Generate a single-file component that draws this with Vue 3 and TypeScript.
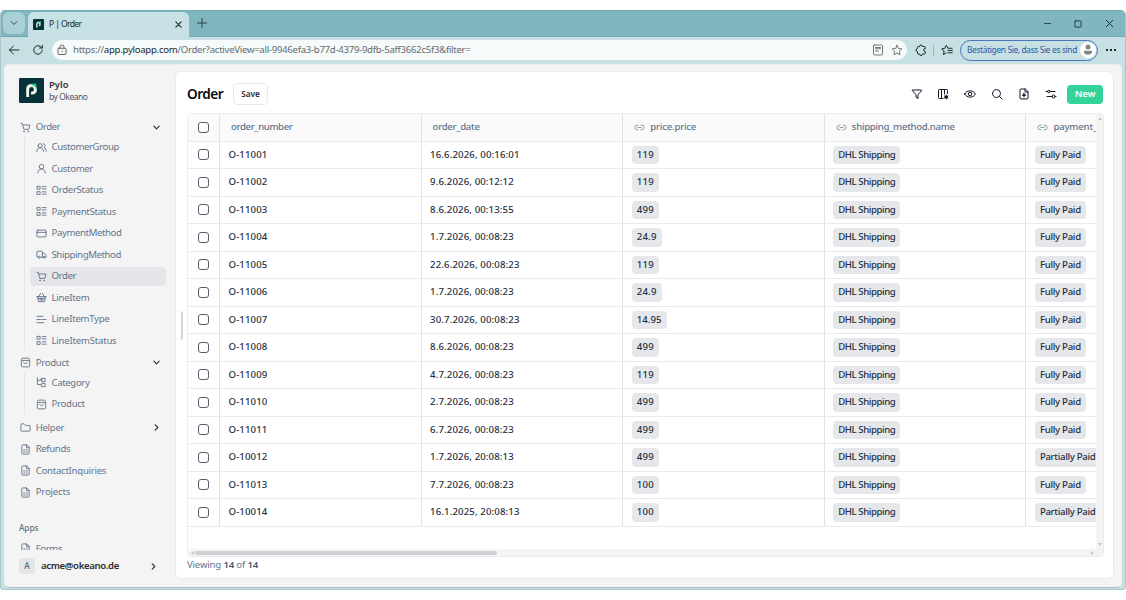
<script setup lang="ts">
interface Item { label: string; icon: string; w: number; active?: boolean }
interface Group { label: string; icon: string; w: number; children: Item[] }

const icons: Record<string, string> = {
  cart: 'M2 3h3l3.4 13h10.8l2.3-9.5H6.2 M8 20.5a1 1 0 1 0 2 0a1 1 0 1 0-2 0 M17 20.5a1 1 0 1 0 2 0a1 1 0 1 0-2 0',
  users: 'M4.500 8a4.500 4.500 0 1 0 9 0a4.500 4.500 0 1 0-9 0 M1.500 21c0-5 3-8.500 7.500-8.500s7.500 3.500 7.500 8.500 M16 3.500a4.500 4.500 0 0 1 1.500 8.500c3 1 5 4 5 8',
  user: 'M7 8a5 5 0 1 0 10 0a5 5 0 1 0-10 0 M4 21.500c0-5 3-8.500 8-8.500s8 3.500 8 8.500',
  list: 'M3 3h6v6H3z M3 14.500h6v6H3z M13.500 3.500H22 M13.500 8.500H22 M13.500 15H22 M13.500 20H22',
  card: 'M4 4.500h16a2 2 0 0 1 2 2v11a2 2 0 0 1-2 2H4a2 2 0 0 1-2-2v-11a2 2 0 0 1 2-2z M2 9.500h20',
  truck: 'M5 18H3.500A1.500 1.500 0 0 1 2 16.500v-10A1.500 1.500 0 0 1 3.500 5h9A1.500 1.500 0 0 1 14 6.500V18H9.500 M14 9h4l4 4.500V18h-2.500 M5 18a2.200 2.200 0 1 0 4.400 0a2.200 2.200 0 1 0-4.400 0 M15 18a2.200 2.200 0 1 0 4.400 0a2.200 2.200 0 1 0-4.400 0',
  basket: 'M1.500 10h21 M3.500 10.500l2 10.500h13l2-10.500 M6 10l4-7 M18 10l-4-7 M9 13.500v4.500 M12 13.500v4.500 M15 13.500v4.500 M4 14h16',
  lines: 'M2 5h13 M2 12h9 M14 12h8 M2 19h15',
  bag: 'M4.500 7.500h15a1.500 1.500 0 0 1 1.500 1.500v10a2.500 2.500 0 0 1-2.500 2.500h-13A2.500 2.500 0 0 1 3 19V6l2-3.500h14L21 6v3 M8 11.500c.8 4.500 7.200 4.500 8 0',
  tree: 'M3 2v14.500h7 M3 7h7 M13 3h7v7h-7z M13 14h7v7h-7z M10 5h3',
  folder: 'M2 5.500A1.500 1.500 0 0 1 3.500 4H9l3 3.500h8.500A1.500 1.500 0 0 1 22 9v9.500a1.500 1.500 0 0 1-1.500 1.500h-17A1.500 1.500 0 0 1 2 18.500z',
  file: 'M14 2H6a2 2 0 0 0-2 2v16a2 2 0 0 0 2 2h12a2 2 0 0 0 2-2V8z M14 2v6h6 M8 13h2.500 M13.500 13H16 M8 17.500h2.500 M13.500 17.500H16',
  down: 'M5 8.500l7 7l7-7',
  right: 'M8.500 5l7 7l-7 7',
  filter: 'M3 4h18v1.500l-7 8V21l-4-2.500v-5L3 5.500z',
  columns: 'M21 11V4.500A1.500 1.500 0 0 0 19.500 3h-15A1.500 1.500 0 0 0 3 4.500v15A1.500 1.500 0 0 0 4.500 21H12 M9 3v18 M15 3v9 M16 18a2.500 2.500 0 1 0 5 0a2.500 2.500 0 1 0-5 0 M18.500 14v8 M15 16l7 4 M15 20l7-4',
  eye: 'M1.500 12C5 3.500 19 3.500 22.500 12C19 20.500 5 20.500 1.500 12z M8.500 12a3.500 3.500 0 1 0 7 0a3.500 3.500 0 1 0-7 0',
  search: 'M3 11a8 8 0 1 0 16 0a8 8 0 1 0-16 0 M17 17l5 5',
  upload: 'M14 2H6a2 2 0 0 0-2 2v16a2 2 0 0 0 2 2h12a2 2 0 0 0 2-2V8z M14 2v6h6 M12 18v-7 M9 14l3-3l3 3 M9.500 15h5',
  sliders: 'M2 7h3 M10 7h10 M5 7a2.500 2.500 0 1 0 5 0a2.500 2.500 0 1 0-5 0 M4 17h10 M14 17a3 3 0 1 0 6 0a3 3 0 1 0-6 0 M20 17h2',
  link: 'M9 17H7A5 5 0 0 1 7 7h2 M15 7h2a5 5 0 0 1 0 10h-2 M8 12h8',
  back: 'M22 12H3 M11 4l-8 8l8 8',
  reload: 'M20.500 12a8.500 8.500 0 1 1-3-6.500L20.500 8 M20.500 2.500V8H15',
  lock: 'M5.500 8.500h13A1.500 1.500 0 0 1 20 10v9a2 2 0 0 1-2 2H6a2 2 0 0 1-2-2v-9a1.500 1.500 0 0 1 1.500-1.500z M8 8V6a4 4 0 0 1 8 0v2 M12 14v1.500',
  close: 'M5 5l14 14 M19 5L5 19',
  plus: 'M12 1v22 M1 12h22',
  minimize: 'M4 12h16',
  maximize: 'M6 4.500h12A1.500 1.500 0 0 1 19.500 6v12a1.500 1.500 0 0 1-1.500 1.500H6A1.500 1.500 0 0 1 4.500 18V6A1.500 1.500 0 0 1 6 4.500z',
  reader: 'M5 2h14a2 2 0 0 1 2 2v16a2 2 0 0 1-2 2H5a2 2 0 0 1-2-2V4a2 2 0 0 1 2-2z M7 7h10 M7 9.500h10 M7 14h6',
  star: 'M12 2.500l3 6.300l6.800.9l-5 4.800l1.300 6.900L12 18.100l-6.100 3.300l1.300-6.900l-5-4.800L9 8.800z',
  puzzle: 'M9 5a3 3 0 0 1 6 0h4a1.500 1.500 0 0 1 1.500 1.500V9a3 3 0 0 0 0 6v3.500A1.500 1.500 0 0 1 19 20h-4a3 3 0 0 1-6 0H6.500A1.500 1.500 0 0 1 5 18.500V15a3 3 0 0 1 0-6V6.500A1.500 1.500 0 0 1 6.500 5z',
  favorites: 'M14 8.500L10.500 2.500L7.500 8.700L1.500 9.700l4.500 4.800L5 21l5.500-3 M15 8.500h7.500 M14 13h8.500 M14 17.500h8.500',
}

const groups: Group[] = [
  {
    label: 'Order', icon: 'cart', w: 24.5,
    children: [
      { label: 'CustomerGroup', icon: 'users', w: 67.5 },
      { label: 'Customer', icon: 'user', w: 41.5 },
      { label: 'OrderStatus', icon: 'list', w: 51.5 },
      { label: 'PaymentStatus', icon: 'list', w: 64.5 },
      { label: 'PaymentMethod', icon: 'card', w: 70 },
      { label: 'ShippingMethod', icon: 'truck', w: 69.5 },
      { label: 'Order', icon: 'cart', w: 24.5, active: true },
      { label: 'LineItem', icon: 'basket', w: 38 },
      { label: 'LineItemType', icon: 'lines', w: 58 },
      { label: 'LineItemStatus', icon: 'list', w: 65 },
    ],
  },
  {
    label: 'Product', icon: 'bag', w: 33.3,
    children: [
      { label: 'Category', icon: 'tree', w: 38 },
      { label: 'Product', icon: 'bag', w: 33.3 },
    ],
  },
]
const pages: Item[] = [
  { label: 'Helper', icon: 'folder', w: 28.5 },
  { label: 'Refunds', icon: 'file', w: 34.5 },
  { label: 'ContactInquiries', icon: 'file', w: 70.5 },
  { label: 'Projects', icon: 'file', w: 34.5 },
]
const columns = [
  { label: 'order_number', w: 61.5, linked: false },
  { label: 'order_date', w: 47, linked: false },
  { label: 'price.price', w: 46, linked: true },
  { label: 'shipping_method.name', w: 103, linked: true },
  { label: 'payment_', w: 43.5, linked: true },
]
const rows: [string, string, string, string][] = [
  ['O-11001', '16.6.2026, 00:16:01', '119', 'Fully Paid'],
  ['O-11002', '9.6.2026, 00:12:12', '119', 'Fully Paid'],
  ['O-11003', '8.6.2026, 00:13:55', '499', 'Fully Paid'],
  ['O-11004', '1.7.2026, 00:08:23', '24.9', 'Fully Paid'],
  ['O-11005', '22.6.2026, 00:08:23', '119', 'Fully Paid'],
  ['O-11006', '1.7.2026, 00:08:23', '24.9', 'Fully Paid'],
  ['O-11007', '30.7.2026, 00:08:23', '14.95', 'Fully Paid'],
  ['O-11008', '8.6.2026, 00:08:23', '499', 'Fully Paid'],
  ['O-11009', '4.7.2026, 00:08:23', '119', 'Fully Paid'],
  ['O-11010', '2.7.2026, 00:08:23', '499', 'Fully Paid'],
  ['O-11011', '6.7.2026, 00:08:23', '499', 'Fully Paid'],
  ['O-10012', '1.7.2026, 20:08:13', '499', 'Partially Paid'],
  ['O-11013', '7.7.2026, 00:08:23', '100', 'Fully Paid'],
  ['O-10014', '16.1.2025, 20:08:13', '100', 'Partially Paid'],
]
const tools = ['filter', 'columns', 'eye', 'search', 'upload', 'sliders']
const priceWidths: Record<number, number> = { 3: 17.3, 4: 20, 5: 25 }

// Spaces the letters of a label so that it takes the given width.
const vFit = {
  mounted(el: HTMLElement, binding: { value: number }) {
    const length = el.textContent?.length ?? 1
    el.style.letterSpacing = `${(binding.value - el.getBoundingClientRect().width) / length}px`
  },
}
</script>

<template>
  <div class="stage">
    <div class="window">
      <header class="titlebar">
        <div class="tabmenu"><svg class="ic i10" viewBox="0 0 24 24"><path :d="icons.down" /></svg></div>
        <div class="tab">
          <svg class="fav" viewBox="0 0 24 24"><rect width="24" height="24" rx="1" fill="#06333a" /><path d="M8.500 18.500v-7.500a3.500 3.500 0 1 1 4.500 3.400" fill="none" stroke="#f4f6e9" stroke-width="3" /><path d="M12.500 5.500h5v5.500q-1-3.500-5-3.500z" fill="#29d391" /></svg>
          <span v-fit="32.5" class="tabtext">P | Order</span>
          <svg class="ic i9 tabclose" viewBox="0 0 24 24"><path :d="icons.close" /></svg>
        </div>
        <svg class="ic i10 plus" viewBox="0 0 24 24"><path :d="icons.plus" /></svg>
        <div class="wincontrols">
          <svg class="ic i9" viewBox="0 0 24 24"><path :d="icons.minimize" /></svg>
          <svg class="ic i10" viewBox="0 0 24 24"><path :d="icons.maximize" /></svg>
          <svg class="ic i11" viewBox="0 0 24 24"><path :d="icons.close" /></svg>
        </div>
      </header>
      <div class="toolbar">
        <svg class="ic i12" viewBox="0 0 24 24"><path :d="icons.back" /></svg>
        <svg class="ic i12 reload" viewBox="0 0 24 24"><path :d="icons.reload" /></svg>
        <div class="address">
          <svg class="ic i12 dim" viewBox="0 0 24 24"><path :d="icons.lock" /></svg>
          <span v-fit="397.5" class="url">https://<b>app.pyloapp.com</b>/Order?activeView=all-9946efa3-b77d-4379-9dfb-5aff3662c5f3&amp;filter=</span>
          <svg class="ic i12 reader" viewBox="0 0 24 24"><path :d="icons.reader" /></svg>
          <svg class="ic i12 star" viewBox="0 0 24 24"><path :d="icons.star" /></svg>
        </div>
        <svg class="ic i12 puzzle" viewBox="0 0 24 24"><path :d="icons.puzzle" /></svg>
        <i class="rule"></i>
        <svg class="ic i12" viewBox="0 0 24 24"><path :d="icons.favorites" /></svg>
        <div class="profile">
          <span v-fit="110">Bestätigen Sie, dass Sie es sind</span>
          <svg class="avatar" viewBox="0 0 16 16"><circle cx="8" cy="8" r="8" fill="#fff" /><circle cx="8" cy="5" r="2.500" fill="#858585" /><path d="M4 8.800h8v1.500c0 3.200-8 3.200-8 0z" fill="#858585" /></svg>
        </div>
        <div class="more"><i></i><i></i><i></i></div>
      </div>

      <div class="page">
        <aside class="sidebar">
          <div class="brand">
            <svg class="logo" viewBox="0 0 24 24"><rect width="24" height="24" rx="1.200" fill="#06333a" /><path d="M8.300 18.300v-7.300a3.700 3.700 0 1 1 4.700 3.500h-1.500" fill="none" stroke="#f4f6e9" stroke-width="2.800" /><path d="M12 5.500h4.500v5.500q-.8-3.500-4.500-4z" fill="#29d391" /></svg>
            <div class="brandtext"><strong v-fit="19.500">Pylo</strong><span v-fit="38.500">by Okeano</span></div>
          </div>
          <nav class="nav">
            <section v-for="g in groups" :key="g.label" class="group">
              <div class="grouphead">
                <svg class="ic i11" viewBox="0 0 24 24"><path :d="icons[g.icon]" /></svg>
                <span v-fit="g.w">{{ g.label }}</span>
                <svg class="ic i9 chev" viewBox="0 0 24 24"><path :d="icons.down" /></svg>
              </div>
              <div class="children">
                <div v-for="c in g.children" :key="c.label" class="child" :class="{ active: c.active }">
                  <svg class="ic i11" viewBox="0 0 24 24"><path :d="icons[c.icon]" /></svg>
                  <span v-fit="c.w">{{ c.label }}</span>
                </div>
              </div>
            </section>
            <div v-for="p in pages" :key="p.label" class="pageitem">
              <svg class="ic i11" viewBox="0 0 24 24"><path :d="icons[p.icon]" /></svg>
              <span v-fit="p.w">{{ p.label }}</span>
              <svg v-if="p.icon === 'folder'" class="ic i9 chev" viewBox="0 0 24 24"><path :d="icons.right" /></svg>
            </div>
            <div class="apps"><span v-fit="19.500">Apps</span></div>
            <div class="pageitem">
              <svg class="ic i11" viewBox="0 0 24 24"><path :d="icons.file" /></svg>
              <span v-fit="26.500">Forms</span>
            </div>
          </nav>
          <div class="account">
            <i class="initial">A</i>
            <strong v-fit="78">acme@okeano.de</strong>
            <svg class="ic i9" viewBox="0 0 24 24"><path :d="icons.right" /></svg>
          </div>
        </aside>

        <main class="panel">
          <i class="handle"></i>
          <div class="actions">
            <h1 v-fit="36">Order</h1>
            <button class="save"><span v-fit="18.500">Save</span></button>
            <div class="tools"><svg v-for="t in tools" :key="t" class="ic i12" viewBox="0 0 24 24"><path :d="icons[t]" /></svg></div>
            <button class="new"><span v-fit="20.500">New</span></button>
          </div>
          <div class="grid">
            <div class="view">
              <div class="row head">
                <div class="check"><i></i></div>
                <div v-for="c in columns" :key="c.label" class="cell">
                  <svg v-if="c.linked" class="ic link" viewBox="0 0 24 24"><path :d="icons.link" /></svg>
                  <span v-fit="c.w">{{ c.label }}</span>
                </div>
              </div>
              <div v-for="r in rows" :key="r[0]" class="row">
                <div class="check"><i></i></div>
                <div class="cell"><span v-fit="39">{{ r[0] }}</span></div>
                <div class="cell"><span v-fit="89.500 - (19 - r[1].length) * 5.800">{{ r[1] }}</span></div>
                <div class="cell"><b class="badge"><span v-fit="priceWidths[r[2].length]">{{ r[2] }}</span></b></div>
                <div class="cell"><b class="badge"><span v-fit="57">DHL Shipping</span></b></div>
                <div class="cell"><b class="badge"><span v-fit="r[3].length > 10 ? 55.500 : 41">{{ r[3] }}</span></b></div>
              </div>
            </div>
            <div class="vscroll"><i class="up"></i><i class="dn"></i></div>
            <div class="hscroll"><i class="lt"></i><i class="thumb"></i><i class="rt"></i></div>
          </div>
          <footer v-fit="71" class="status">Viewing <b>14</b> of <b>14</b></footer>
        </main>
      </div>
    </div>
  </div>
</template>

<style>
body { margin: 0; background: #fff; }
</style>

<style scoped>
* { box-sizing: border-box; }
.stage { width: 1126px; height: 600px; padding-top: 10px; overflow: hidden; font-family: "Noto Sans", "Open Sans", sans-serif; font-size: 9.6px; line-height: 14px; color: #253040; background: #fff; }
.window { width: 1126px; height: 580px; display: flex; flex-direction: column; background: #c7e0e4; border: 1px solid #abc4c8; border-top: 1px solid #76aab3; border-radius: 5px 5px 4px 4px; overflow: hidden; }
.ic { flex: none; fill: none; stroke: currentColor; stroke-width: 2; stroke-linecap: round; stroke-linejoin: round; display: block; }
.i9 { width: 9px; height: 9px; }
.i10 { width: 10px; height: 10px; }
.i11 { width: 11px; height: 11px; }
.i12 { width: 12px; height: 12px; }
span, strong, h1 { white-space: nowrap; }

.titlebar { flex: none; height: 26px; background: #7fb6bf; border-bottom: 1px solid #71a6b1; display: flex; color: #1d292c; }
.tabmenu { width: 22px; height: 22px; margin: 1px 3px 0 2px; border-radius: 6px; background: #a9d0d6; display: flex; align-items: center; justify-content: center; }
.tab { width: 161px; height: 26px; margin-top: 1px; padding: 0 6px 2px 5px; border-radius: 6px 6px 0 0; background: #c8e1e5; display: flex; align-items: center; }
.fav { width: 11px; height: 11px; margin-right: 5px; }
.tabtext { font-size: 8.600px; }
.tabclose { margin-left: auto; stroke-width: 3; }
.plus { margin: 7px 0 0 8px; }
.wincontrols { margin-left: auto; display: flex; align-items: center; gap: 21px; padding-right: 10px; color: #15272b; }
.toolbar { flex: none; height: 27px; display: flex; align-items: center; padding: 0 8px 1px 7px; color: #20292b; }
.reload { margin-left: 12px; }
.address { width: 855px; height: 20px; margin-left: 8px; border-radius: 10px; background: #f5fafa; display: flex; align-items: center; padding: 0 4px 0 4px; }
.dim { color: #666; margin-right: 5px; }
.url { font-size: 9.600px; color: #676a6b; }
.url b { font-weight: 400; color: #25292a; }
.reader { margin-left: auto; color: #747878; }
.star { margin-left: 7px; color: #747878; }
.puzzle { margin-left: 8px; }
.rule { width: 1px; height: 11px; background: #a0b5b8; margin: 0 7px 0 6px; }
.profile { width: 138px; height: 21px; margin-left: 7px; border: 1px solid #4678b8; border-radius: 11px; padding: 0 1px 0 6px; display: flex; align-items: center; justify-content: space-between; color: #285ca5; font-size: 8.400px; }
.avatar { width: 16px; height: 16px; }
.more { margin-left: auto; margin-right: 1px; display: flex; gap: 2px; }
.more i { width: 2px; height: 2px; background: #1d292c; }

.page { flex: none; width: 1118px; height: 524px; margin-left: 3px; display: flex; background: #f4f4f4; border: 1px solid #e8efef; border-bottom-color: #a9bfc4; border-radius: 5px; overflow: hidden; }
.sidebar { width: 170px; height: 522px; display: flex; flex-direction: column; color: #64748b; }
.brand { flex: none; height: 53px; display: flex; padding: 13px 0 0 14px; }
.logo { width: 25px; height: 25px; }
.brandtext { display: flex; flex-direction: column; align-items: flex-start; margin-left: 5px; line-height: 12px; font-size: 8.400px; color: #50555c; }
.brandtext strong { font-size: 9.400px; font-weight: 600; color: #333; margin-top: 1px; }
.nav { flex: none; height: 432px; overflow: hidden; }
.grouphead, .pageitem { display: flex; align-items: center; padding: 0 14px 0 15px; }
.grouphead { height: 18.700px; }
.pageitem { height: 21.600px; }
.grouphead span, .pageitem span { margin-left: 4.700px; }
.chev { margin-left: auto; color: #262d38; stroke-width: 3; }
.group { margin-bottom: 3px; }
.children { margin-left: 19px; padding-top: 1.200px; border-left: 1px solid #e3e5e9; }
.child { width: 136px; height: 19px; margin: 0 0 2.500px 4.500px; display: flex; align-items: center; padding-left: 6.500px; border-radius: 4px; }
.child:last-child { margin-bottom: 1.500px; }
.child span { margin-left: 4.500px; }
.active { background: #e5e6e9; }
.apps { height: 20px; margin-top: 15px; padding-left: 14px; font-size: 8.400px; font-weight: 500; line-height: 20px; }
.account { flex: none; height: 32px; display: flex; align-items: center; padding-left: 14px; color: #2b2f36; }
.initial { width: 16px; height: 16px; border-radius: 4px; background: #e4e5e8; color: #59677c; font-style: normal; font-size: 8.400px; font-weight: 500; line-height: 16px; text-align: center; margin-right: 6px; }
.account strong { font-weight: 600; }
.account svg { margin-left: 30px; stroke-width: 3; }

.panel { position: relative; width: 939px; height: 508px; margin-top: 6px; background: #fff; border: 1px solid #e7eaf1; border-radius: 6px; padding-left: 11px; display: flex; flex-direction: column; }
.handle { position: absolute; left: 4px; top: 239px; width: 3px; height: 29px; border-right: 2px solid #d0d5dd; border-radius: 0 3px 3px 0; }
.actions { flex: none; height: 41px; display: flex; align-items: center; padding: 3px 10px 0 0; }
h1 { margin: 0; font-size: 13.600px; font-weight: 600; line-height: 18px; color: #08090c; }
button { font-family: inherit; cursor: pointer; padding: 0; }
.save { width: 35px; height: 22px; margin-left: 10px; border: 1px solid #e5e9f1; border-radius: 4px; background: #fff; color: #1f2937; font-size: 8.200px; font-weight: 600; line-height: 12px; }
.tools { margin-left: auto; display: flex; gap: 14.900px; color: #111827; }
.new { width: 36px; height: 19px; margin-left: 10px; border: 0; border-radius: 4px; background: #34d399; color: #fff; font-size: 9.600px; font-weight: 600; line-height: 14px; }
.grid { flex: none; width: 917px; height: 444px; border: 1px solid #e9edf3; border-radius: 4px; overflow: hidden; display: grid; grid-template: 435px 7px / 908px 7px; }
.view { overflow: hidden; width: 908px; }
.row { display: flex; width: 1041px; height: 27.530px; border-bottom: 1px solid #e9ebf0; font-weight: 500; }
.check { flex: none; width: 32px; border-right: 1px solid #dfe2e9; display: flex; align-items: center; justify-content: center; }
.check i { width: 11px; height: 11px; border: 1px solid #555d6c; border-radius: 3px; background: #fff; }
.cell { flex: none; width: 201.600px; border-right: 1px solid #dfe2e9; padding-left: 8.500px; display: flex; align-items: center; }
.head { background: #fafafa; color: #64748b; }
.head .cell { padding-left: 11px; }
.link { width: 11px; height: 11px; margin-right: 5px; color: #8b94a3; }
.badge { height: 18.500px; border-radius: 4px; background: #e5e7eb; padding: 0 5px; font-weight: 500; line-height: 18px; }
.vscroll { background: #f4f4f5; display: flex; flex-direction: column; justify-content: space-between; align-items: center; padding: 3px 0; }
.hscroll { grid-column: 1 / 3; background: #f4f4f5; display: flex; align-items: center; padding: 0 9px 0 3px; }
.thumb { width: 302px; height: 4px; border-radius: 2px; background: #cfd0d3; margin-left: 1px; }
.up, .dn, .lt, .rt { border: 2px solid transparent; width: 0; height: 0; }
.up { border-bottom: 3px solid #c4c6c9; border-top: 0; }
.dn { border-top: 3px solid #c4c6c9; border-bottom: 0; }
.lt { border-right: 3px solid #c4c6c9; border-left: 0; }
.rt { border-left: 3px solid #c4c6c9; border-right: 0; margin-left: auto; }
.status { align-self: flex-start; margin-top: 1px; white-space: nowrap; color: #64748b; }
.status b { font-weight: 600; color: #475569; }
</style>
